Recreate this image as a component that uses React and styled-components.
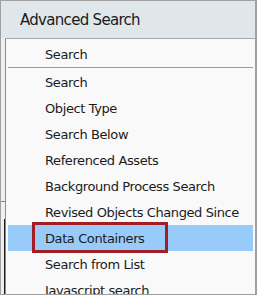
import React from "react";
import styled, { createGlobalStyle } from "styled-components";

const GlobalStyle = createGlobalStyle`
  html, body {
    margin: 0;
    padding: 0;
    background: #ffffff;
  }
  body {
    font-family: Tahoma, "DejaVu Sans", Verdana, sans-serif;
  }
`;

const Frame = styled.div`
  width: 257px;
  height: 295px;
  box-sizing: border-box;
  border: 1px solid #a0a0a0;
  border-right-width: 2px;
  display: flex;
  flex-direction: column;
  overflow: hidden;
  background: #f0f0f0;
`;

const TitleBar = styled.div`
  height: 37px;
  flex: none;
  background: #dfe7eb;
  display: flex;
  align-items: center;
  padding-left: 19px;
  font-size: 15px;
  color: #1b1b1b;
  letter-spacing: -0.7px;
`;

const Body = styled.div`
  flex: 1;
  display: flex;
  min-height: 0;
  position: relative;
`;

const PageEdge = styled.div`
  width: 4px;
  flex: none;
  position: relative;
`;

const EdgeTick = styled.div`
  position: absolute;
  left: 0;
  right: 0;
  top: 163px;
  height: 1px;
  background: #8a8a8a;
`;

const EdgeBar = styled.div`
  position: absolute;
  right: 0;
  width: 1px;
  top: 181px;
  bottom: 0;
  background: #1a1a1a;
`;

const Menu = styled.div`
  flex: 1;
  border-left: 1px solid #8e8e8e;
  border-top: 1px solid #a8a8a8;
  background: #f9f9f9;
  padding: 0 2px;
  font-size: 13px;
  color: #1b1b1b;
  letter-spacing: -0.4px;
`;

const MenuHeader = styled.div`
  height: 28px;
  display: flex;
  align-items: center;
  padding-left: 37px;
  padding-top: 2px;
  box-sizing: border-box;
  border-bottom: 1px solid #9a9a9a;
  margin-bottom: 1px;
  height: 29px;
`;

const Item = styled.div`
  position: relative;
  height: 26px;
  display: flex;
  align-items: center;
  padding-left: 37px;
  white-space: nowrap;
  background: ${(p) => (p.$active ? "#99cbfa" : "transparent")};
`;

const Callout = styled.div`
  position: absolute;
  left: 24px;
  top: -3px;
  width: 136px;
  height: 31px;
  box-sizing: border-box;
  border: 3px solid #a31d24;
`;

const items = [
  "Search",
  "Object Type",
  "Search Below",
  "Referenced Assets",
  "Background Process Search",
  "Revised Objects Changed Since",
  "Data Containers",
  "Search from List",
  "Javascript search",
];

export default function App() {
  return (
    <>
      <GlobalStyle />
      <Frame>
        <TitleBar>Advanced Search</TitleBar>
        <Body>
          <PageEdge>
            <EdgeTick />
            <EdgeBar />
          </PageEdge>
          <Menu>
            <MenuHeader>Search</MenuHeader>
            {items.map((label) => (
              <Item key={label} $active={label === "Data Containers"}>
                {label}
                {label === "Data Containers" && <Callout />}
              </Item>
            ))}
          </Menu>
        </Body>
      </Frame>
    </>
  );
}
